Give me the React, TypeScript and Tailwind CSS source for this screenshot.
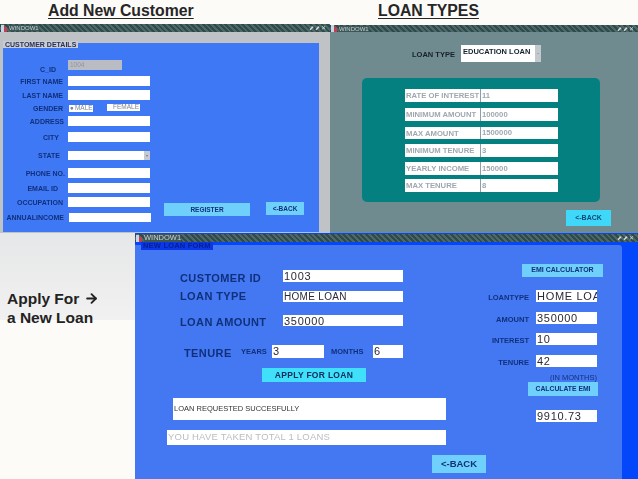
import { ArrowRight } from "lucide-react";

const FONT = "font-['Liberation_Sans',Arial,sans-serif]";
const NAVY = "text-[#10307c]";
const DIGITS = "text-[11px] tracking-[0.7px]";

function TitleBar({ label, className, labelClass }: { label: string; className: string; labelClass?: string }) {
  return (
    <div className={`flex items-center bg-[repeating-linear-gradient(45deg,#2f4a4c_0px,#2f4a4c_2px,#4d6866_2px,#4d6866_4px)] ${className}`}>
      <svg width="7" height="7" viewBox="0 0 7 7" className="ml-px shrink-0">
        <rect x="0" y="0" width="3" height="7" fill="#c8d4e8" />
        <rect x="3" y="2" width="3" height="5" fill="#c04050" />
      </svg>
      <span className={`ml-px bg-[#3c5658] leading-none text-[#c7d2d2] ${labelClass ?? "text-[6px]"}`}>{label}</span>
      <span className="ml-auto mr-[3px] text-[6px] leading-none tracking-[1px] text-[#d5dcdc]">⬈⬈✕</span>
    </div>
  );
}

function FormRow({ label, className, labelClass, children }: { label: string; className: string; labelClass?: string; children: React.ReactNode }) {
  return (
    <div className={`flex items-center ${className}`}>
      <div className={`whitespace-nowrap text-right font-bold text-[7px] leading-none ${NAVY} ${labelClass ?? "w-[60px] mr-[1px]"}`}>{label}</div>
      {children}
    </div>
  );
}

function CustomerWindow() {
  const white = "ml-[4px] h-full w-[82px] bg-white";
  return (
    <div className="absolute left-0 top-[24px] flex h-[209px] w-[330px] flex-col bg-[#bfc3c6]">
      <TitleBar label="WINDOW1" className="h-[8px] shrink-0" />
      <div className="relative ml-[3px] mt-[11px] flex h-[189px] w-[316px] bg-[#3f78f4]">
        <div className="absolute left-0 top-[-2px] bg-[#c9ccd2] px-[2px] text-[7px] font-bold leading-[7px] text-[#26325a]">CUSTOMER DETAILS</div>
        <div className="w-[150px] shrink-0 pt-[17px]">
          <FormRow label="C_ID" className="h-[10px]" labelClass="w-[53px] mr-[8px] pt-[9px]">
            <div className="ml-[4px] flex h-full w-[54px] items-center bg-[#b9bcc2] pl-[2px] text-[6.5px] text-[#8d95a5]">1004</div>
          </FormRow>
          <FormRow label="FIRST NAME" className="mt-[6px] h-[10px]"><div className={white} /></FormRow>
          <FormRow label="LAST NAME" className="mt-[4px] h-[10px]"><div className={white} /></FormRow>
          <FormRow label="GENDER" className="mt-[5px] h-[7px]">
            <div className="ml-[5px] flex h-full w-[24px] items-center bg-white pl-[1px] text-[6.5px] leading-none text-[#7d8796]">●<span className="ml-px">MALE</span></div>
            <div className="ml-[14px] mt-[-2px] flex h-full w-[33px] items-center justify-end bg-white pr-px text-[6.5px] leading-none text-[#7d8796]">FEMALE</div>
          </FormRow>
          <FormRow label="ADDRESS" className="mt-[4px] h-[10px]" labelClass="w-[61px]"><div className={white} /></FormRow>
          <FormRow label="CITY" className="mt-[6px] h-[10px]" labelClass="w-[56px] mr-[5px]"><div className={white} /></FormRow>
          <FormRow label="STATE" className="mt-[9px] h-[9px]" labelClass="w-[57px] mr-[4px]">
            <div className="ml-[4px] flex h-full w-[82px] justify-end bg-white">
              <div className="flex w-[6px] items-center justify-center bg-[#c6cad0] text-[4px] leading-none text-[#777]">▾</div>
            </div>
          </FormRow>
          <FormRow label="PHONE NO." className="mt-[8px] h-[10px]" labelClass="w-[62px]"><div className="ml-[3px] h-full w-[82px] bg-white" /></FormRow>
          <FormRow label="EMAIL ID" className="mt-[5px] h-[10px]" labelClass="w-[55px] mr-[6px]"><div className={white} /></FormRow>
          <FormRow label="OCCUPATION" className="mt-[4px] h-[10px]"><div className={white} /></FormRow>
          <FormRow label="ANNUALINCOME" className="mt-[6px] h-[9px]" labelClass="w-[61px]"><div className="ml-[5px] h-full w-[82px] bg-white" /></FormRow>
        </div>
        <div className="flex items-start pl-[11px] pt-[159px]">
          <div className={`mt-px flex h-[13px] w-[86px] items-center justify-center bg-[#6fd0fb] text-[6.5px] font-bold ${NAVY}`}>REGISTER</div>
          <div className={`ml-[16px] flex h-[13px] w-[38px] items-center justify-center bg-[#6fd0fb] text-[6.5px] font-bold ${NAVY}`}>&lt;-BACK</div>
        </div>
      </div>
    </div>
  );
}

const LOAN_RULES = [
  ["RATE OF INTEREST", "11", "mt-[11px] h-[13px]"],
  ["MINIMUM AMOUNT", "100000", "mt-[6px] h-[13px]"],
  ["MAX AMOUNT", "1500000", "mt-[6px] h-[12px]"],
  ["MINIMUM TENURE", "3", "mt-[5px] h-[13px]"],
  ["YEARLY INCOME", "150000", "mt-[5px] h-[13px]"],
  ["MAX TENURE", "8", "mt-[4px] h-[13px]"],
];

function LoanTypesWindow() {
  return (
    <div className="absolute left-[330px] top-[25px] flex h-[208px] w-[308px] flex-col bg-[#6f8b8f]">
      <TitleBar label="WINDOW1" className="h-[7px] shrink-0" />
      <div className="mt-[13px] flex h-[17px] items-center pl-[82px]">
        <div className="mt-[3px] w-[43px] whitespace-nowrap text-[7.5px] font-bold text-[#14202c]">LOAN TYPE</div>
        <div className="ml-[6px] flex h-full w-[80px] bg-white pl-[2px]">
          <span className="whitespace-nowrap pt-[3px] text-[7.5px] font-bold leading-none text-[#14202c]">EDUCATION LOAN</span>
          <div className="ml-auto flex w-[6px] items-center justify-center bg-[#c3c8cc] text-[5px] text-[#666]">-</div>
        </div>
      </div>
      <div className="ml-[32px] mt-[16px] h-[124px] w-[238px] overflow-hidden rounded-[5px] bg-[#058080] pl-[43px]">
        {LOAN_RULES.map(([name, value, cls]) => (
          <div key={name} className={`flex w-[153px] items-center bg-white text-[7.7px] font-bold text-[#a0a8ae] ${cls}`}>
            <div className="h-full w-[76px] whitespace-nowrap border-r border-[#8aa0a8] pl-px leading-[13px]">{name}</div>
            <div className="pl-[1px]">{value}</div>
          </div>
        ))}
      </div>
      <div className="ml-[236px] mt-[8px] flex h-[16px] w-[45px] items-center justify-center bg-[#40d8f8] text-[7px] font-bold text-[#104878]">&lt;-BACK</div>
    </div>
  );
}

function InputBox({ value, className }: { value: string; className: string }) {
  return (
    <div className={`flex items-start overflow-hidden whitespace-nowrap bg-white pl-px pt-px leading-none text-[#2a2a3a] ${className}`}>
      {value}
    </div>
  );
}

function LoanFormWindow() {
  const bigLabel = `whitespace-nowrap text-[11px] font-bold leading-none tracking-[0.4px] ${NAVY}`;
  const emiLabel = `w-[43px] whitespace-nowrap flex justify-end text-[7.5px] font-bold leading-none ${NAVY}`;
  return (
    <div className="absolute left-[135px] top-[233px] flex h-[246px] w-[503px] flex-col bg-[#0446fa]">
      <TitleBar label="WINDOW1" className="mt-px h-[8px] shrink-0" labelClass="text-[7.5px]" />
      <div className="relative ml-0 mt-[3px] flex h-[234px] w-[487px] rounded-tr-[3px] bg-[#4478f2]">
        <div className="absolute left-[6px] top-[-3px] whitespace-nowrap bg-[#0a38e8] px-[2px] text-[7.5px] font-bold leading-[8px] tracking-[0.2px] text-[#061f8a]">NEW LOAN FORM</div>
        <div className="flex w-[351px] shrink-0 flex-col pt-[25px]">
          <div className="flex h-[12px] items-center pl-[45px]">
            <div className={`w-[103px] ${bigLabel} pt-[4px]`}>CUSTOMER ID</div>
            <InputBox value="1003" className={`h-full w-[120px] ${DIGITS}`} />
          </div>
          <div className="mt-[9px] flex h-[11px] items-center pl-[45px]">
            <div className={`w-[103px] ${bigLabel}`}>LOAN TYPE</div>
            <InputBox value="HOME LOAN" className="h-full w-[120px] text-[10px] tracking-[0.3px]" />
          </div>
          <div className="mt-[13px] flex h-[11px] items-center pl-[45px]">
            <div className={`w-[103px] ${bigLabel} pt-[4px]`}>LOAN AMOUNT</div>
            <InputBox value="350000" className={`h-full w-[120px] ${DIGITS}`} />
          </div>
          <div className="mt-[19px] flex h-[13px] items-center pl-[49px]">
            <div className={`w-[57px] ${bigLabel} pt-[3px]`}>TENURE</div>
            <div className={`w-[31px] text-[7.5px] font-bold ${NAVY}`}>YEARS</div>
            <InputBox value="3" className={`h-full w-[52px] ${DIGITS}`} />
            <div className={`ml-[7px] w-[42px] text-[7.5px] font-bold ${NAVY}`}>MONTHS</div>
            <InputBox value="6" className={`h-full w-[30px] ${DIGITS}`} />
          </div>
          <div className="ml-[127px] mt-[10px] flex h-[14px] w-[104px] items-center justify-center bg-[#40e0fa] text-[8.5px] font-bold tracking-[0.3px] text-[#083060]">APPLY FOR LOAN</div>
          <div className="ml-[38px] mt-[16px] flex h-[22px] w-[273px] items-center bg-white pl-px text-[7.5px] text-[#333]">LOAN REQUESTED SUCCESFULLY</div>
          <div className="ml-[32px] mt-[10px] flex h-[15px] w-[279px] items-center bg-white pl-px text-[9.5px] tracking-[0.2px] text-[#b9bdc4]">YOU HAVE TAKEN TOTAL 1 LOANS</div>
          <div className="ml-[297px] mt-[10px] flex h-[18px] w-[54px] items-center justify-center bg-[#6fd0fb] text-[9.5px] font-bold text-[#10307c]">&lt;-BACK</div>
        </div>
        <div className="flex flex-col pt-[19px]">
          <div className={`ml-[36px] flex h-[13px] w-[81px] items-center justify-center bg-[#6fd0fb] text-[7px] font-bold ${NAVY}`}>EMI CALCULATOR</div>
          {[
            ["LOANTYPE", "HOME LOAN", "mt-[13px]"],
            ["AMOUNT", "350000", "mt-[10px]"],
            ["INTEREST", "10", "mt-[9px]"],
            ["TENURE", "42", "mt-[10px]"],
          ].map(([label, value, cls]) => (
            <div key={label} className={`flex h-[12px] items-center ${cls}`}>
              <div className={`${emiLabel} pt-[3px]`}>{label}</div>
              <InputBox value={value} className={`ml-[7px] h-full w-[61px] ${DIGITS}`} />
            </div>
          ))}
          <div className="ml-[50px] mt-[7px] w-[61px] whitespace-nowrap text-right text-[7.5px] leading-[7px] text-[#14307c]">(IN MONTHS)</div>
          <div className={`ml-[42px] mt-px flex h-[14px] w-[70px] items-center justify-center bg-[#6fd0fb] text-[6.8px] font-bold ${NAVY}`}>CALCULATE EMI</div>
          <InputBox value="9910.73" className={`ml-[50px] mt-[14px] h-[12px] w-[61px] ${DIGITS}`} />
        </div>
      </div>
    </div>
  );
}

export default function App() {
  return (
    <div className={`relative h-[479px] w-[638px] overflow-hidden bg-[#fdfbf8] ${FONT}`}>
      <div className="absolute inset-0 blur-[0.3px]">
        <CustomerWindow />
        <LoanTypesWindow />
        <LoanFormWindow />
      </div>
      <div className="relative flex h-[24px]">
        <div className="ml-[48px] w-[330px] text-[15.8px] font-bold leading-[22px] text-[#262626] underline underline-offset-2">Add New Customer</div>
        <div className="text-[15.8px] font-bold leading-[22px] text-[#262626] underline underline-offset-2">LOAN TYPES</div>
      </div>
      <div className="absolute left-0 top-[233px] w-[135px]">
        <div className="h-[87px] bg-gradient-to-b from-[#e6e7e8] to-[#f1f1f1]" />
        <div className="absolute left-[7px] top-[56px] text-[15.5px] font-bold leading-[19px] text-[#222]">
          <div className="flex items-center">Apply For <ArrowRight className="ml-[5px] h-[15px] w-[15px]" strokeWidth={3} /></div>
          <div>a New Loan</div>
        </div>
      </div>
    </div>
  );
}
